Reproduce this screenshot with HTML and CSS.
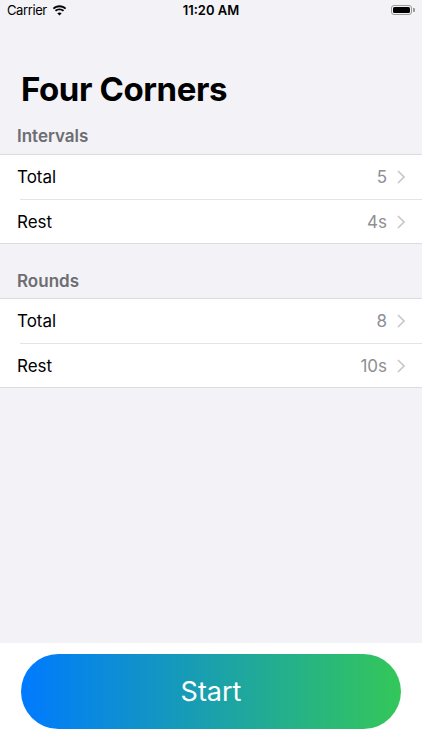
FILE: index.html
```html
<!DOCTYPE html>
<html lang="en">
<head>
  <meta charset="UTF-8">
  <title>Four Corners</title>
  <link rel="stylesheet" href="styles.css">
</head>
<body>
  <div class="screen">
    <div class="status-bar">
      <div class="status-left">
        <span>Carrier</span>
        <svg class="wifi" width="15" height="11" viewBox="0 0 15 11">
          <path d="M7.5 2.2c2.1 0 4 .8 5.5 2.1l1.2-1.3C12.4 1.3 10 .3 7.5.3S2.6 1.3.8 3l1.2 1.3C3.5 3 5.4 2.2 7.5 2.2z" fill="#000"/>
          <path d="M7.5 5.2c1.3 0 2.5.5 3.4 1.3l1.2-1.3C10.9 4.1 9.3 3.4 7.5 3.4S4.1 4.1 2.9 5.2l1.2 1.3c.9-.8 2.1-1.3 3.4-1.3z" fill="#000"/>
          <path d="M7.5 10.6l2.2-2.4c-.6-.5-1.4-.8-2.2-.8s-1.6.3-2.2.8z" fill="#000"/>
        </svg>
      </div>
      <div class="status-time">11:20 AM</div>
      <div class="status-right">
        <div class="battery"><div class="battery-fill"></div></div>
        <div class="battery-cap"></div>
      </div>
    </div>

    <div class="content">
      <h1 class="title">Four Corners</h1>

      <div class="section-header">Intervals</div>
      <div class="group">
        <div class="row">
          <span class="row-label">Total</span>
          <span class="row-value">5</span>
          <svg class="chevron" width="8" height="14" viewBox="0 0 8 14"><path d="M1 1l6 6-6 6" fill="none" stroke="#c7c7cc" stroke-width="1.6"/></svg>
        </div>
        <div class="row">
          <span class="row-label">Rest</span>
          <span class="row-value">4s</span>
          <svg class="chevron" width="8" height="14" viewBox="0 0 8 14"><path d="M1 1l6 6-6 6" fill="none" stroke="#c7c7cc" stroke-width="1.6"/></svg>
        </div>
      </div>

      <div class="section-header gap">Rounds</div>
      <div class="group">
        <div class="row">
          <span class="row-label">Total</span>
          <span class="row-value">8</span>
          <svg class="chevron" width="8" height="14" viewBox="0 0 8 14"><path d="M1 1l6 6-6 6" fill="none" stroke="#c7c7cc" stroke-width="1.6"/></svg>
        </div>
        <div class="row">
          <span class="row-label">Rest</span>
          <span class="row-value">10s</span>
          <svg class="chevron" width="8" height="14" viewBox="0 0 8 14"><path d="M1 1l6 6-6 6" fill="none" stroke="#c7c7cc" stroke-width="1.6"/></svg>
        </div>
      </div>
    </div>

    <div class="footer">
      <button class="start">Start</button>
    </div>
  </div>
</body>
</html>
```

FILE: styles.css
```css
* {
  margin: 0;
  padding: 0;
  box-sizing: border-box;
}

body {
  background: #f2f2f7;
  font-family: Inter, "Liberation Sans", sans-serif;
  color: #000;
  overflow: hidden;
}

.screen {
  width: 422px;
  height: 750px;
  display: flex;
  flex-direction: column;
}

/* status bar */
.status-bar {
  height: 20px;
  display: flex;
  align-items: center;
  justify-content: space-between;
  padding: 0 7px 0 7px;
  font-size: 13px;
}

.status-left {
  width: 120px;
  display: flex;
  align-items: center;
  gap: 5px;
  letter-spacing: -0.4px;
}

.status-time {
  font-weight: 600;
}

.status-right {
  width: 120px;
  display: flex;
  justify-content: flex-end;
  align-items: center;
}

.battery {
  width: 21px;
  height: 10px;
  border: 1px solid #9a9a9a;
  border-radius: 3px;
  padding: 1px;
}

.battery-fill {
  width: 100%;
  height: 100%;
  background: #000;
  border-radius: 1.5px;
}

.battery-cap {
  width: 1.5px;
  height: 4px;
  background: #9a9a9a;
  border-radius: 0 1px 1px 0;
  margin-left: 1px;
}

/* list */
.content {
  flex: 1;
}

.title {
  font-size: 33px;
  font-weight: 700;
  line-height: 46px;
  padding: 46px 21px 0;
  letter-spacing: -0.4px;
}

.section-header {
  font-size: 17px;
  font-weight: 600;
  line-height: 20px;
  color: #6d6d72;
  padding: 14px 17px 8px;
}

.section-header.gap {
  padding-top: 27px;
  padding-bottom: 7px;
}

.group {
  background: #fff;
  box-shadow: inset 0 1px #dcdce0, inset 0 -1px #dcdce0;
}

.row {
  height: 45px;
  display: flex;
  align-items: center;
  padding: 0 17px;
  font-size: 17px;
  position: relative;
}

.row + .row::before {
  content: "";
  position: absolute;
  top: 0;
  left: 20px;
  right: 0;
  border-top: 1px solid #e4e4e8;
}

.row-label {
  flex: 1;
}

.row-value {
  color: #8e8e93;
  margin-right: 10px;
}

/* bottom button */
.footer {
  height: 107px;
  background: #fff;
  padding: 11px 21px 0;
}

.start {
  width: 100%;
  height: 75px;
  border: none;
  border-radius: 38px;
  background: linear-gradient(to right, #007aff, #34c759);
  color: #fff;
  font-family: Inter, "Liberation Sans", sans-serif;
  font-size: 27px;
  font-weight: 400;
}
```
